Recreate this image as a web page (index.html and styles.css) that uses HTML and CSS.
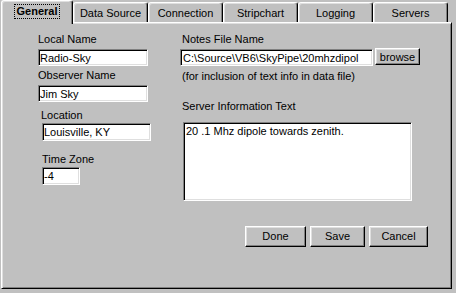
FILE: index.html
```html
<!DOCTYPE html>
<html lang="en">
<head>
  <meta charset="UTF-8" />
  <title>SkyPipe Options</title>
  <link rel="stylesheet" href="styles.css">
</head>
<body>
  <div class="dialog">
    <div class="tabs">
      <div class="tab active"><span class="focus">General</span></div>
      <div class="tab">Data Source</div>
      <div class="tab">Connection</div>
      <div class="tab">Stripchart</div>
      <div class="tab">Logging</div>
      <div class="tab">Servers</div>
    </div>

    <div class="panel">
      <div class="col-left">
        <label class="lbl" for="localName">Local Name</label>
        <input class="field w-name" type="text" id="localName" value="Radio-Sky" />

        <label class="lbl lbl-observer" for="observerName">Observer Name</label>
        <input class="field w-name f-observer" type="text" id="observerName" value="Jim Sky" />

        <label class="lbl lbl-location" for="location">Location</label>
        <input class="field w-location" type="text" id="location" value="Louisville, KY" />

        <label class="lbl lbl-zone" for="timeZone">Time Zone</label>
        <input class="field w-zone" type="text" id="timeZone" value="-4" />
      </div>

      <div class="col-right">
        <label class="lbl lbl-right" for="notesFile">Notes File Name</label>
        <div class="file-row">
          <input class="field w-file" type="text" id="notesFile" value="C:\Source\VB6\SkyPipe\20mhzdipol" />
          <button class="btn btn-browse">browse</button>
        </div>
        <p class="hint">(for inclusion of text info in data file)</p>

        <label class="lbl lbl-right lbl-server" for="serverText">Server Information Text</label>
        <textarea class="field server-text" id="serverText">20 .1 Mhz dipole towards zenith.</textarea>

        <div class="actions">
          <button class="btn btn-done">Done</button>
          <button class="btn btn-save">Save</button>
          <button class="btn btn-cancel">Cancel</button>
        </div>
      </div>
    </div>
  </div>
</body>
</html>
```

FILE: styles.css
```css
body {
  margin: 0;
  background: #c0c0c0;
  font-family: "Liberation Sans", Arial, sans-serif;
  font-size: 11px;
  line-height: 13px;
  color: #000;
}

.dialog {
  margin-left: 1px;
  width: 451px;
}

/* tab strip */
.tabs {
  display: flex;
  align-items: flex-end;
  height: 22px;
}

.tab {
  box-sizing: border-box;
  width: 75px;
  height: 20px;
  padding-top: 4px;
  text-align: center;
  background: #c0c0c0;
  border-top: 1px solid #fff;
  border-left: 1px solid #fff;
  border-right: 1px solid #000;
  border-radius: 3px 3px 0 0;
  box-shadow: inset -1px 0 #808080, inset 1px 1px #dfdfdf;
}

.tab.active {
  position: relative;
  z-index: 1;
  width: 72px;
  height: 24px;
  margin-bottom: -2px;
  padding-top: 3px;
  font-weight: bold;
}

.focus {
  display: inline-block;
  padding: 0 2px;
  border: 1px dotted #000;
}

/* page body */
.panel {
  box-sizing: border-box;
  display: flex;
  height: 267px;
  padding-top: 10px;
  border-top: 1px solid #fff;
  border-left: 1px solid #fff;
  border-right: 1px solid #000;
  border-bottom: 1px solid #000;
  box-shadow: inset 1px 1px #dfdfdf, inset -1px -1px #808080;
}

.col-left {
  width: 142px;
  margin-left: 36px;
}

.col-right {
  width: 260px;
}

.lbl {
  display: block;
}

.field {
  display: block;
  box-sizing: border-box;
  margin: 0;
  padding: 0 1px;
  font: inherit;
  color: #000;
  background: #fff;
  border: 1px solid;
  border-color: #808080 #fff #fff #808080;
  box-shadow: inset 1px 1px #000, inset -1px -1px #dfdfdf;
  border-radius: 0;
  outline: none;
}

.w-name {
  width: 110px;
  height: 17px;
  margin-top: 3px;
}

.lbl-observer {
  margin-top: 3px;
}

.lbl-location {
  margin-top: 7px;
  margin-left: 3px;
}

.w-location {
  width: 109px;
  height: 18px;
  margin-top: 1px;
  margin-left: 4px;
}

.lbl-zone {
  margin-top: 12px;
  margin-left: 4px;
}

.w-zone {
  width: 38px;
  height: 18px;
  margin-top: 1px;
  margin-left: 4px;
}

.lbl-right {
  margin-left: 2px;
}

.file-row {
  display: flex;
  align-items: flex-start;
  margin-top: 2px;
}

.w-file {
  width: 193px;
  height: 17px;
  margin-top: 1px;
  padding-left: 2px;
}

.hint {
  margin: 4px 0 0 2px;
}

.lbl-server {
  margin-top: 17px;
}

.server-text {
  width: 229px;
  height: 79px;
  margin-top: 9px;
  margin-left: 3px;
  padding: 2px 2px;
  resize: none;
  overflow: hidden;
}

/* buttons */
.btn {
  box-sizing: border-box;
  margin: 0;
  padding: 0;
  font: inherit;
  line-height: 13px;
  color: #000;
  background: #c0c0c0;
  border: 1px solid;
  border-color: #fff #000 #000 #fff;
  box-shadow: inset -1px -1px #808080, inset 1px 1px #dfdfdf;
  border-radius: 0;
}

.btn-browse {
  width: 45px;
  height: 17px;
  margin-left: 2px;
  padding-top: 1px;
}

.actions {
  display: flex;
  gap: 4px;
  margin-top: 25px;
  margin-left: 65px;
}

.actions .btn {
  height: 21px;
}

.btn-done {
  width: 61px;
}

.btn-save {
  width: 55px;
}

.btn-cancel {
  width: 59px;
}
```
